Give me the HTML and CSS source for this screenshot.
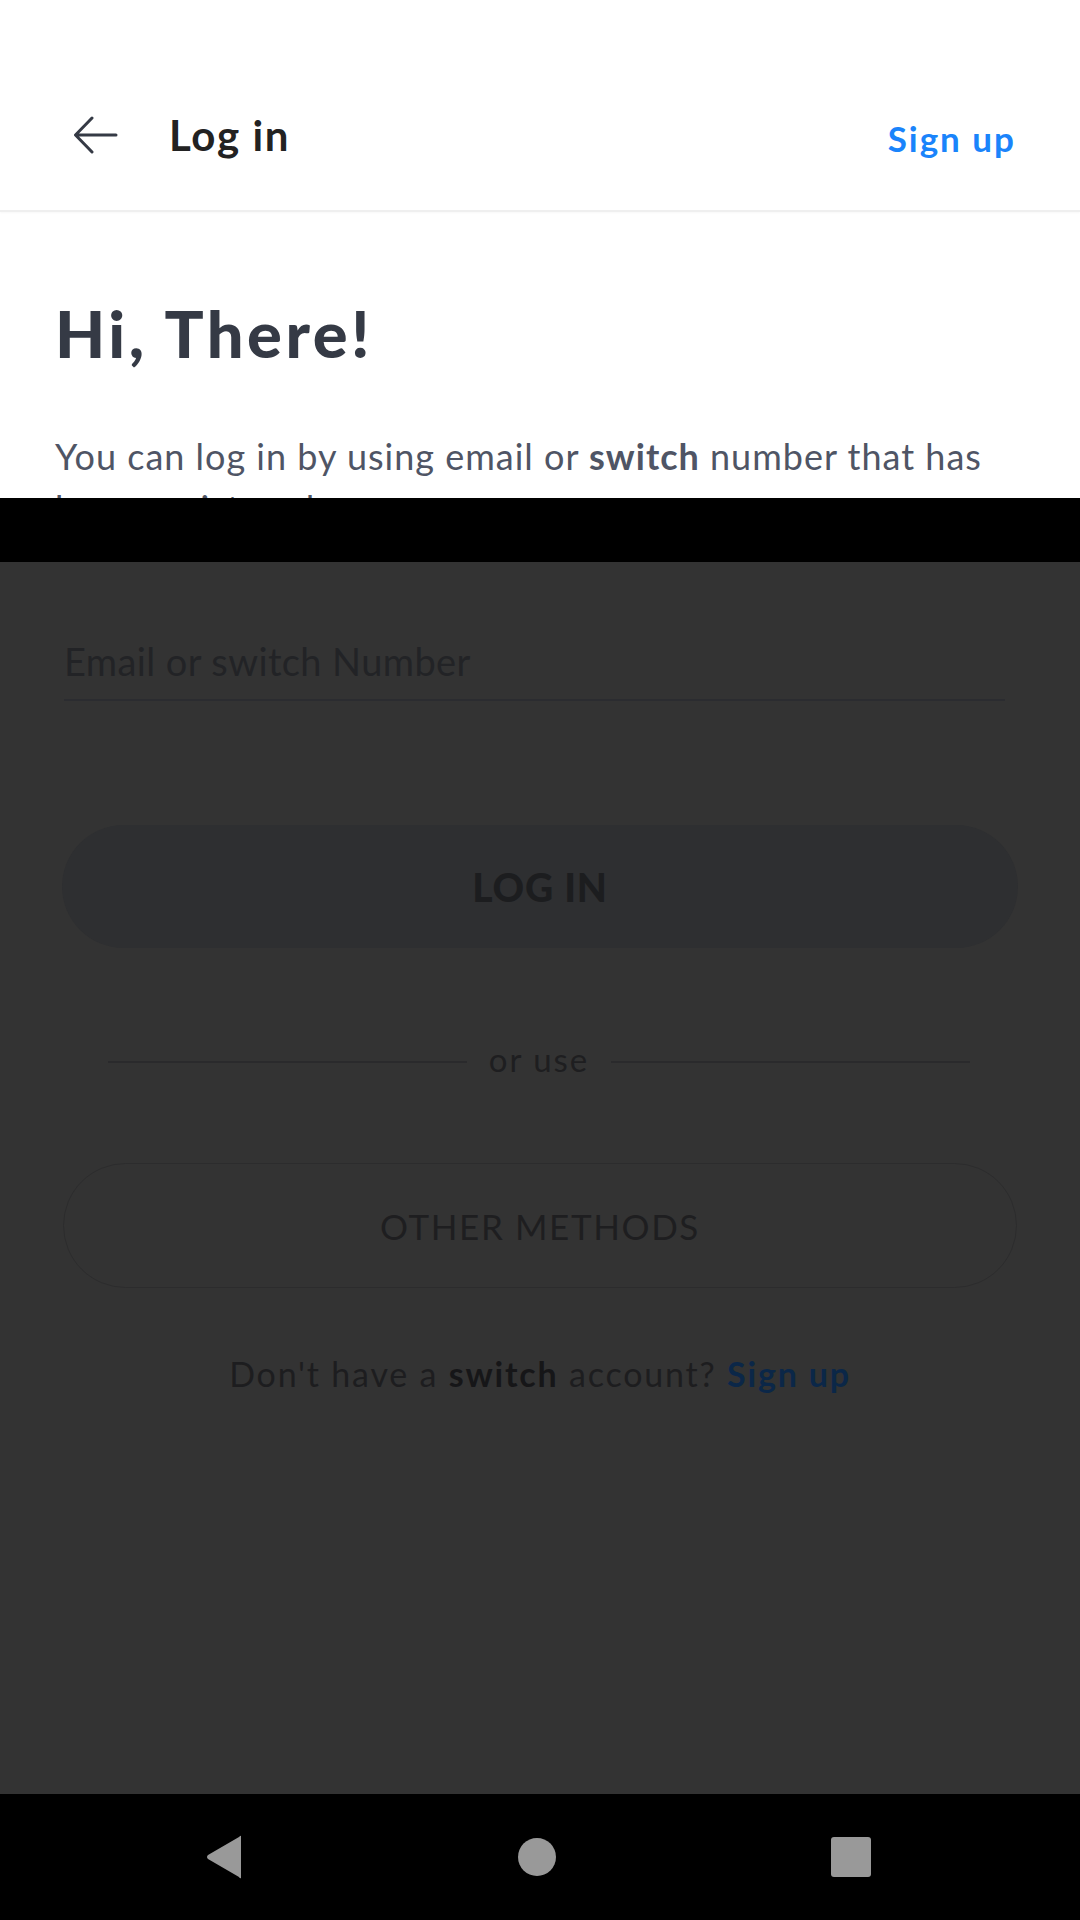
FILE: index.html
```html
<!DOCTYPE html>
<html>
<head>
<meta charset="utf-8">
<link rel="stylesheet" href="styles.css">
</head>
<body>
<div class="screen">
  <section class="top">
    <div class="status"></div>
    <header class="toolbar">
      <div class="toolbar-left">
        <svg class="back" width="46" height="38" viewBox="0 0 46 38">
          <path d="M44 19 H4 M20 2 L3.5 19 L20 36" fill="none" stroke="#353a45" stroke-width="3" stroke-linecap="round" stroke-linejoin="round"/>
        </svg>
        <span class="title">Log in</span>
      </div>
      <a class="signup-link">Sign up</a>
    </header>
    <div class="intro">
      <h1 class="hello">Hi, There!</h1>
      <p class="lead">You can log in by using email or <b>switch</b> number that has been registered.</p>
    </div>
  </section>
  <div class="band"></div>
  <section class="dim">
    <div class="field"><span class="placeholder">Email or switch Number</span></div>
    <div class="btn-primary">LOG IN</div>
    <div class="divider">
      <span class="rule"></span>
      <span class="or">or use</span>
      <span class="rule"></span>
    </div>
    <div class="btn-outline">OTHER METHODS</div>
    <p class="footer">Don't have a <b>switch</b> account? <span class="footer-link">Sign up</span></p>
  </section>
  <nav class="navbar">
    <svg width="36" height="44" viewBox="0 0 36 44"><path d="M35 1 V43 Q34 44 33 42 L2 24 Q0 22 2 20 L33 2 Q35 0 35 1 Z" fill="#999"/></svg>
    <span class="home"></span>
    <span class="recent"></span>
  </nav>
</div>
</body>
</html>
```
FILE: styles.css
```css
html, body {
  margin: 0;
  padding: 0;
  width: 1080px;
  height: 1920px;
  overflow: hidden;
  background: #333333;
}
.screen {
  display: flex;
  flex-direction: column;
  width: 1080px;
  height: 1920px;
  font-family: Lato, "Noto Sans", sans-serif;
}
.top {
  height: 498px;
  overflow: hidden;
  background: #ffffff;
  flex: none;
}
.status {
  height: 60px;
}
.toolbar {
  height: 150px;
  display: flex;
  align-items: center;
  justify-content: space-between;
  padding: 0 64px 0 72px;
  border-bottom: 2px solid #efefef;
  box-shadow: 0 1px 2px rgba(0,0,0,0.03);
}
.toolbar-left {
  display: flex;
  align-items: center;
  gap: 51px;
}
.back {
  display: block;
}
.title {
  font-size: 42px;
  font-weight: 700;
  color: #222222;
  letter-spacing: 1.6px;
}
.signup-link {
  font-size: 35px;
  font-weight: 700;
  color: #1a84fb;
  margin-top: 6px;
  letter-spacing: 2px;
}
.intro {
  padding: 0 55px;
}
.hello {
  margin: 82px 0 0;
  font-size: 65px;
  line-height: 78px;
  font-weight: 900;
  color: #353a45;
  letter-spacing: 3.5px;
}
.lead {
  margin: 58px 0 0;
  font-size: 36px;
  line-height: 52px;
  color: #4f5565;
  letter-spacing: 1px;
}
.lead b {
  font-weight: 700;
}
.band {
  height: 64px;
  background: #000000;
  flex: none;
}
.dim {
  flex: 1;
  background: #333333;
  display: flex;
  flex-direction: column;
}
.field {
  margin: 76px 75px 0 64px;
  padding-bottom: 15px;
  border-bottom: 2px solid #2b2c30;
}
.placeholder {
  display: block;
  font-size: 38px;
  line-height: 46px;
  color: #222326;
  letter-spacing: 0.4px;
}
.btn-primary {
  margin: 124px 62px 0;
  height: 123px;
  border-radius: 62px;
  background: #2e2f31;
  display: flex;
  align-items: center;
  justify-content: center;
  font-size: 39px;
  font-weight: 900;
  color: #1c1d1f;
  letter-spacing: 0.8px;
}
.divider {
  margin: 91px 110px 0 108px;
  height: 40px;
  display: flex;
  align-items: center;
  gap: 22px;
}
.rule {
  flex: 1;
  height: 2px;
  background: #2a2a2c;
  margin-top: 6px;
}
.or {
  font-size: 33px;
  color: #1e1e20;
  letter-spacing: 2px;
}
.btn-outline {
  margin: 84px 63px 0;
  height: 123px;
  border: 1px solid #2c2c2d;
  border-radius: 63px;
  display: flex;
  align-items: center;
  justify-content: center;
  font-size: 35px;
  color: #1e1e20;
  letter-spacing: 1.6px;
}
.footer {
  margin: 65px 0 0;
  text-align: center;
  font-size: 34px;
  line-height: 41px;
  color: #1d1d1f;
  letter-spacing: 1.8px;
}
.footer b {
  font-weight: 700;
  color: #161618;
}
.footer-link {
  font-weight: 700;
  color: #0b2748;
}
.navbar {
  height: 126px;
  flex: none;
  background: #000000;
  display: flex;
  align-items: center;
  justify-content: space-between;
  padding: 0 209px 0 206px;
}
.home {
  width: 38px;
  height: 38px;
  border-radius: 50%;
  background: #999999;
}
.recent {
  width: 40px;
  height: 40px;
  border-radius: 3px;
  background: #999999;
}
```
